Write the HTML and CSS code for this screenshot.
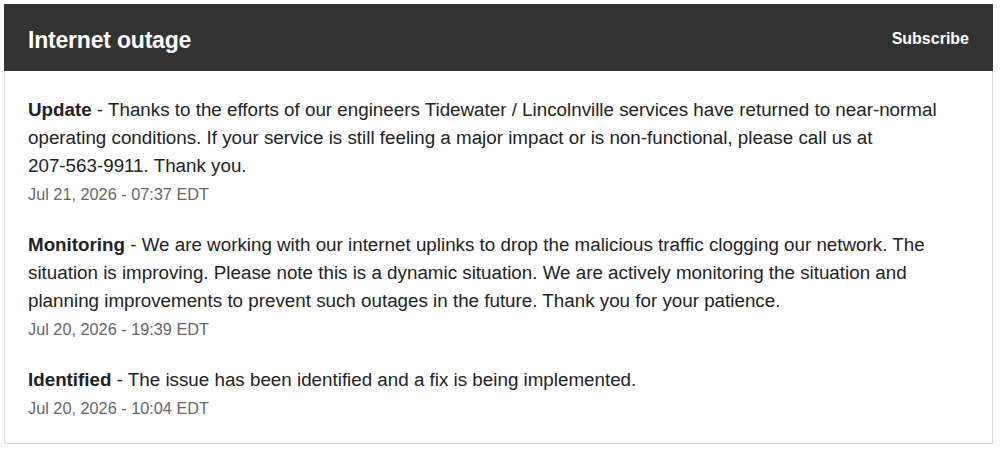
FILE: index.html
```html
<!DOCTYPE html>
<html lang="en">
<head>
<meta charset="utf-8">
<title>Internet outage</title>
<link rel="stylesheet" href="styles.css">
</head>
<body>
<section class="incident">
  <header class="incident-header">
    <h1 class="incident-title">Internet outage</h1>
    <a class="subscribe" href="#">Subscribe</a>
  </header>
  <div class="updates">
    <div class="update">
      <p class="update-body"><strong>Update</strong> - Thanks to the efforts of our engineers Tidewater / Lincolnville services have returned to near-normal operating conditions. If your service is still feeling a major impact or is non-functional, please call us at <span class="phone">207-563-9911</span>. Thank you.</p>
      <p class="update-time">Jul 21, 2026 - 07:37 EDT</p>
    </div>
    <div class="update">
      <p class="update-body"><strong>Monitoring</strong> - We are working with our internet uplinks to drop the malicious traffic clogging our network. The situation is improving. Please note this is a dynamic situation. We are actively monitoring the situation and planning improvements to prevent such outages in the future. Thank you for your patience.</p>
      <p class="update-time">Jul 20, 2026 - 19:39 EDT</p>
    </div>
    <div class="update">
      <p class="update-body"><strong>Identified</strong> - The issue has been identified and a fix is being implemented.</p>
      <p class="update-time">Jul 20, 2026 - 10:04 EDT</p>
    </div>
  </div>
</section>
</body>
</html>
```

FILE: styles.css
```css
html, body {
  margin: 0;
  padding: 0;
  background: #ffffff;
}

body {
  font-family: "Liberation Sans", Arial, sans-serif;
  color: #222222;
}

.incident {
  margin: 4px 7px 0 4px;
  border: 1px solid #d9d9d9;
  box-sizing: border-box;
  height: 440px;
}

.incident-header {
  display: flex;
  align-items: center;
  justify-content: space-between;
  box-sizing: border-box;
  height: 67px;
  padding: 6px 24px 0 24px;
  background: #333333;
  color: #ffffff;
  margin: -1px -1px 0 -1px;
}

.incident-title {
  margin: 0;
  font-size: 23px;
  font-weight: bold;
  letter-spacing: -0.2px;
}

.subscribe {
  color: #ffffff;
  text-decoration: none;
  font-size: 16px;
  font-weight: bold;
  margin-top: -4px;
}

.updates {
  display: flex;
  flex-direction: column;
  gap: 23px;
  padding: 25px 30px 0 23px;
}

.update p {
  margin: 0;
}

.update-body {
  font-size: 18.8px;
  line-height: 28px;
  color: #222222;
}

.phone {
  white-space: nowrap;
}

.update-time {
  font-size: 16.3px;
  line-height: 28px;
  color: #666666;
  margin-top: 1px;
}
```
